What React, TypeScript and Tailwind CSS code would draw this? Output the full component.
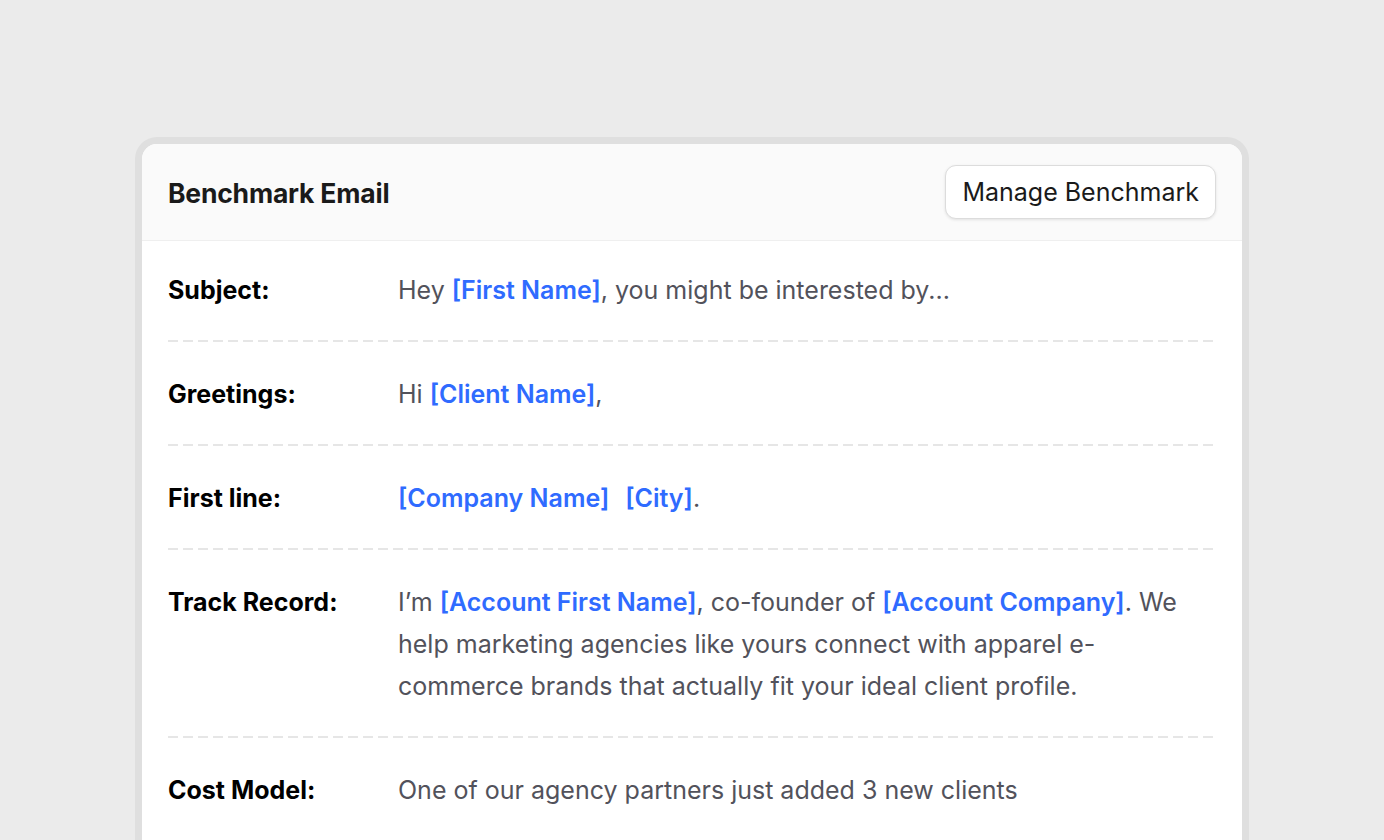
const BLUE = 'font-semibold text-[#2f6bff]';

type Row = { label: string; value: React.ReactNode };

const rows: Row[] = [
  {
    label: 'Subject:',
    value: (
      <>
        Hey <span className={BLUE}>[First Name]</span>, you might be interested by...
      </>
    ),
  },
  {
    label: 'Greetings:',
    value: (
      <>
        Hi <span className={BLUE}>[Client Name]</span>,
      </>
    ),
  },
  {
    label: 'First line:',
    value: (
      <>
        <span className={BLUE}>[Company Name]</span>
        <span className="inline-block w-[16px]" />
        <span className={BLUE}>[City]</span>.
      </>
    ),
  },
  {
    label: 'Track Record:',
    value: (
      <>
        I’m <span className={BLUE}>[Account First Name]</span>, co-founder of{' '}
        <span className={BLUE}>[Account Company]</span>. We help marketing agencies like yours
        connect with apparel e-commerce brands that actually fit your ideal client profile.
      </>
    ),
  },
  {
    label: 'Cost Model:',
    value: <>One of our agency partners just added 3 new clients</>,
  },
];

export default function App() {
  return (
    <div
      className="h-[840px] overflow-hidden bg-[#ebebeb] pt-[137px]"
      style={{ fontFamily: 'Inter, "Noto Sans", sans-serif' }}
    >
      <div className="mx-auto w-[1114px] rounded-t-[22px] bg-[#dfdfdf] px-[7px] pt-[7px] pb-[40px]">
        <div className="overflow-hidden rounded-t-[15px] bg-white">
          {/* Header */}
          <div className="flex h-[97px] items-center justify-between border-b border-[#efefef] bg-[#fafafa] px-[26px]">
            <h2 className="pt-[3px] text-[26.5px] font-bold tracking-[-0.2px] text-[#1a1a1a]">
              Benchmark Email
            </h2>
            <button className="h-[54px] rounded-[11px] border border-[#dcdcdc] bg-white px-[16px] pt-[2px] text-[25px] text-[#1a1a1a] shadow-[0_1px_3px_rgba(0,0,0,0.1)]">
              Manage Benchmark
            </button>
          </div>

          {/* Rows */}
          <div className="px-[26px]">
            {rows.map((row, i) => (
              <div key={row.label}>
                {i > 0 && (
                  <div className="h-[2px] bg-[linear-gradient(to_right,#e6e6e6_10px,transparent_10px)] bg-[length:15px_2px] bg-repeat-x" />
                )}
                <div className={`flex ${i === 0 ? 'pt-[28px]' : 'pt-[31px]'} pb-[29px]`}>
                  <div className="w-[230px] shrink-0 text-[25px] leading-[42px] font-bold text-black">
                    {row.label}
                  </div>
                  <div className="text-[25px] leading-[42px] text-[#52525b]">{row.value}</div>
                </div>
              </div>
            ))}
          </div>
        </div>
      </div>
    </div>
  );
}
